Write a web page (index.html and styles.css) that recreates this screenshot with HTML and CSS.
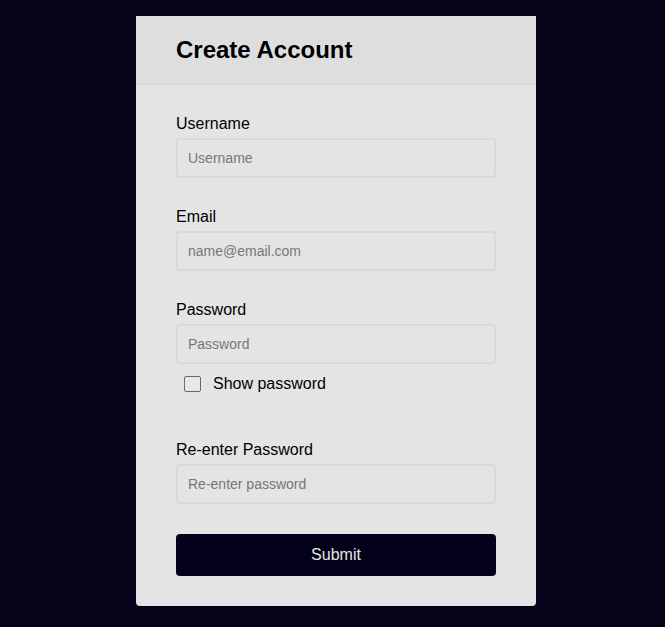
FILE: index.html
```html
<!DOCTYPE html>
<html>
<head>
<meta charset="utf-8">
<link rel="stylesheet" href="styles.css">
</head>
<body>
<div class="card">
  <div class="card-header"><h1 class="title">Create Account</h1></div>
  <form class="form">
    <div class="group">
      <label class="label" for="u">Username</label>
      <input class="input" id="u" type="text" placeholder="Username">
    </div>
    <div class="group">
      <label class="label" for="e">Email</label>
      <input class="input" id="e" type="email" placeholder="name@email.com">
    </div>
    <div class="group">
      <label class="label" for="p">Password</label>
      <input class="input" id="p" type="password" placeholder="Password">
      <div class="check-row">
        <input class="check" type="checkbox" id="s">
        <label class="check-label" for="s">Show password</label>
      </div>
    </div>
    <div class="group group-after-check">
      <label class="label" for="r">Re-enter Password</label>
      <input class="input" id="r" type="password" placeholder="Re-enter password">
    </div>
    <button class="submit" type="button">Submit</button>
  </form>
</div>
</body>
</html>
```
FILE: styles.css
```css
html, body {
  background: #05031a;
}
body {
  margin: 16px 0 0 7px;
  font-family: "Liberation Sans", Arial, sans-serif;
}
.card {
  width: 400px;
  margin: 0 auto;
  background: #e4e4e4;
  border-radius: 0 0 4px 4px;
}
.card-header {
  height: 68px;
  background: #dedede;
  border-bottom: 1px solid #d6d6d6;
  display: flex;
  align-items: center;
  padding: 0 40px;
}
.title {
  margin: 0;
  font-size: 24px;
  font-weight: bold;
  color: #000;
}
.form {
  display: flex;
  flex-direction: column;
  padding: 30px 40px 30px;
}
.group {
  display: flex;
  flex-direction: column;
  margin-bottom: 30px;
}
.label {
  display: block;
  font-size: 16px;
  line-height: 18px;
  color: #000;
  margin-bottom: 5px;
}
.input {
  box-sizing: border-box;
  width: 320px;
  height: 40px;
  margin: 0;
  padding: 0 10px;
  border: 2px solid #d9d9d9;
  border-radius: 3px;
  background: #e4e4e4;
  font-family: "Liberation Sans", Arial, sans-serif;
  font-size: 14px;
  color: #000;
  outline: none;
}
.input::placeholder {
  color: #777;
}
.check-row {
  display: flex;
  align-items: center;
  height: 20px;
  margin-top: 10px;
  margin-bottom: 17px;
}
.check {
  appearance: none;
  -webkit-appearance: none;
  box-sizing: border-box;
  width: 17px;
  height: 16px;
  margin: 0 12px 0 8px;
  border: 1px solid #6a6a6a;
  border-radius: 2px;
  background: #e8e8e8;
}
.check-label {
  font-size: 16px;
  line-height: 18px;
  color: #000;
}
.group-after-check {
  margin-bottom: 30px;
}
.submit {
  width: 320px;
  height: 42px;
  border: none;
  border-radius: 4px;
  background: #03021a;
  color: #e6e6e6;
  font-family: "Liberation Sans", Arial, sans-serif;
  font-size: 16px;
  cursor: pointer;
}
```
